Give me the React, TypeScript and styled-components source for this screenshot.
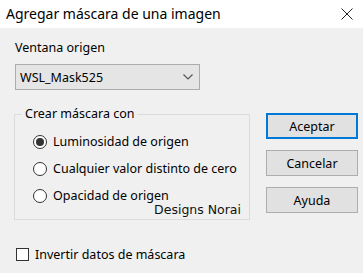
import styled, { createGlobalStyle } from "styled-components";

const GlobalStyle = createGlobalStyle`
  html, body {
    margin: 0;
    padding: 0;
    background: #f0f0f0;
  }
  body {
    font-family: "Noto Sans", "Liberation Sans", sans-serif;
    font-size: 12.5px;
    color: #000;
  }
`;

const Dialog = styled.div`
  width: 363px;
  height: 273px;
  display: flex;
  flex-direction: column;
  background: #f0f0f0;
  overflow: hidden;
`;

const TitleBar = styled.div`
  height: 28px;
  background: #fff;
  display: flex;
  align-items: center;
  justify-content: space-between;
  padding: 0 10px 0 6px;
  box-sizing: border-box;
`;

const Title = styled.span`
  font-size: 14px;
  line-height: 20px;
  color: #000;
`;

const Body = styled.div`
  flex: 1;
  display: flex;
  padding-left: 14px;
`;

const LeftColumn = styled.div`
  width: 236px;
  display: flex;
  flex-direction: column;
`;

const FieldLabel = styled.div`
  margin-top: 12px;
  margin-left: 1px;
  line-height: 16px;
`;

const Select = styled.div`
  margin-top: 8px;
  margin-left: 1px;
  width: 185px;
  height: 26px;
  box-sizing: border-box;
  border: 1px solid #acacac;
  background: #e5e5e5;
  display: flex;
  align-items: center;
  justify-content: space-between;
  padding: 0 6px 0 4px;
`;

const GroupBox = styled.fieldset`
  position: relative;
  margin: 16px 0 0 0;
  padding: 0 0 10px 0;
  border: 1px solid #dcdcdc;
  min-inline-size: 0;
`;

const Legend = styled.legend`
  margin-left: 7px;
  padding: 0 3px;
  line-height: 16px;
`;

const RadioList = styled.div`
  margin-top: 6px;
  padding-left: 18px;
  display: flex;
  flex-direction: column;
`;

const RadioRow = styled.label`
  height: 27px;
  display: flex;
  align-items: center;
  gap: 6px;
`;

const RadioCircle = styled.span<{ $checked?: boolean }>`
  width: 14px;
  height: 14px;
  box-sizing: border-box;
  border: 1px solid #333;
  border-radius: 50%;
  background: #fff;
  display: flex;
  align-items: center;
  justify-content: center;

  &::after {
    content: "";
    width: 8px;
    height: 8px;
    border-radius: 50%;
    background: ${(p) => (p.$checked ? "#333" : "transparent")};
  }
`;

const Watermark = styled.span`
  position: absolute;
  right: 8px;
  bottom: 1px;
  font-family: "DejaVu Sans", sans-serif;
  font-size: 12.5px;
  line-height: 16px;
  color: #111;
`;

const CheckRow = styled.label`
  margin-top: 24px;
  margin-left: 2px;
  height: 20px;
  display: flex;
  align-items: center;
  gap: 6px;
`;

const CheckBox = styled.span`
  width: 13px;
  height: 13px;
  box-sizing: border-box;
  border: 1px solid #333;
  background: #fff;
`;

const RightColumn = styled.div`
  margin-left: 16px;
  padding-top: 85px;
  display: flex;
  flex-direction: column;
  gap: 11px;
`;

const Button = styled.button<{ $default?: boolean }>`
  width: 92px;
  height: 26px;
  box-sizing: border-box;
  font: inherit;
  color: #000;
  background: #e1e1e1;
  border: ${(p) => (p.$default ? "2px solid #0078d7" : "1px solid #adadad")};
  padding: 0;
`;

const Chevron = () => (
  <svg width="10" height="6" viewBox="0 0 10 6">
    <path d="M0.5 0.5 L5 5 L9.5 0.5" fill="none" stroke="#555" strokeWidth="1.2" />
  </svg>
);

const CloseIcon = () => (
  <svg width="12" height="12" viewBox="0 0 12 12">
    <path d="M0.5 0.5 L11.5 11.5 M11.5 0.5 L0.5 11.5" stroke="#222" strokeWidth="1" />
  </svg>
);

const options = [
  { label: "Luminosidad de origen", checked: true },
  { label: "Cualquier valor distinto de cero", checked: false },
  { label: "Opacidad de origen", checked: false },
];

export default function App() {
  return (
    <>
      <GlobalStyle />
      <Dialog>
        <TitleBar>
          <Title>Agregar máscara de una imagen</Title>
          <CloseIcon />
        </TitleBar>
        <Body>
          <LeftColumn>
            <FieldLabel>Ventana origen</FieldLabel>
            <Select>
              <span>WSL_Mask525</span>
              <Chevron />
            </Select>
            <GroupBox>
              <Legend>Crear máscara con</Legend>
              <RadioList>
                {options.map((o) => (
                  <RadioRow key={o.label}>
                    <RadioCircle $checked={o.checked} />
                    {o.label}
                  </RadioRow>
                ))}
              </RadioList>
              <Watermark>Designs Norai</Watermark>
            </GroupBox>
            <CheckRow>
              <CheckBox />
              Invertir datos de máscara
            </CheckRow>
          </LeftColumn>
          <RightColumn>
            <Button $default>Aceptar</Button>
            <Button>Cancelar</Button>
            <Button>Ayuda</Button>
          </RightColumn>
        </Body>
      </Dialog>
    </>
  );
}
